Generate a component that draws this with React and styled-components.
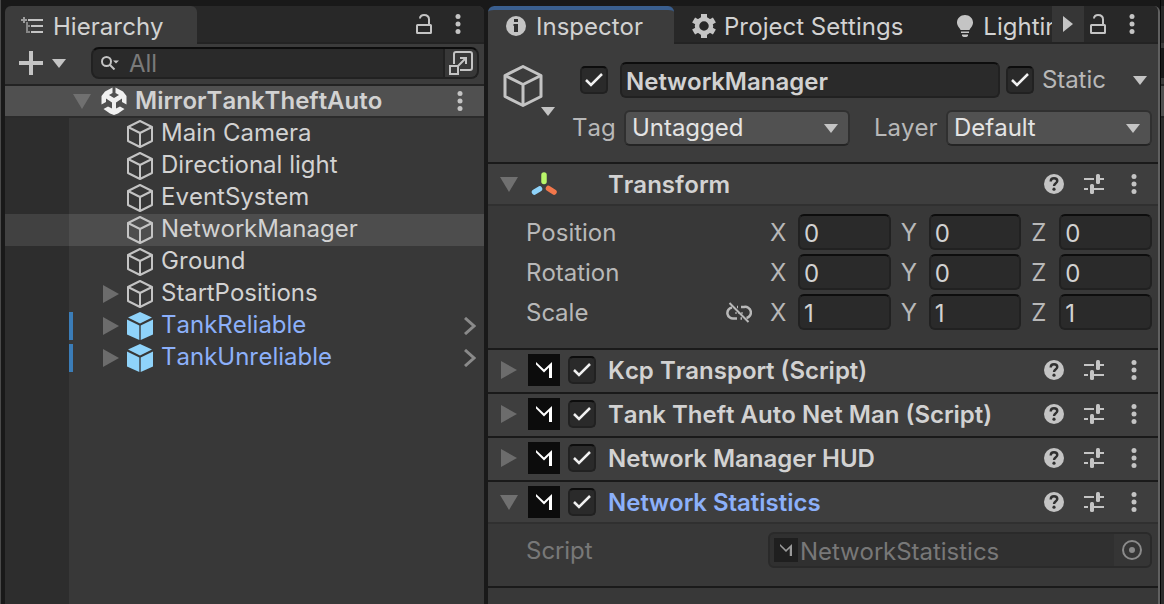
import React from 'react';
import styled, { createGlobalStyle, css } from 'styled-components';

const Global = createGlobalStyle`
  *, *::before, *::after { box-sizing: border-box; }
  body { margin: 0; background: #191919; }
  button, input, select { font: inherit; font-kerning: inherit; color: inherit; margin: 0; }
`;

const Editor = styled.div`
  display: flex;
  min-height: 100vh;
  color: #d2d2d2;
  background: #191919;
  font: 400 24px/32px Inter, "Noto Sans", sans-serif;
  font-kerning: none;
  overflow: hidden;
`;

const LeftEdge = styled.div`
  flex: 0 0 5px;
  border-left: 1px solid #4a4a4a;
`;

const RightEdge = styled.div`
  flex: 0 0 4px;
  border-left: 1px solid #050505;
  background: linear-gradient(#191919 6px, #282828 6px 43px, #3c3c3c 43px 48px, #191919 48px 78px, #3c3c3c 78px 84px, #232323 84px 86px, #505050 86px 116px, #232323 116px 118px, #2d2d2d 118px);
`;

const Panel = styled.section`
  display: flex;
  flex-direction: column;
  flex: ${p => p.$grow} 1 0;
  min-width: 0;
  margin-top: 6px;
  background: #383838;
  border-radius: 6px 6px 0 0;
  overflow: hidden;
`;

const InspectorPanel = styled(Panel)`
  margin-left: 4px;
  border-right: 2px solid #606060;
`;

const TabStrip = styled.header`
  display: flex;
  height: 38px;
  background: #282828;
  box-shadow: inset 0 -2px #232323;
`;

const Tabs = styled.div`
  display: flex;
  flex: 1 1 0;
  min-width: 0;
  overflow: hidden;
`;

const Tab = styled.button`
  display: flex;
  flex: none;
  align-items: center;
  gap: ${p => p.$gap || 10}px;
  height: 38px;
  padding: 0 ${p => p.$end || 0}px 0 ${p => p.$start || 18}px;
  border: 0;
  border-radius: 6px 6px 0 0;
  background: none;
  white-space: nowrap;
  & > span { padding-top: 3px; }
  & > svg { margin-top: 2px; }
  ${p => p.$active && css`
    background: #3c3c3c;
    min-width: ${p.$min}px;
  `}
  ${p => p.$focused && css`border-top: 4px solid #3a5f8f; & > span { padding: 0; } & > svg { margin-top: -2px; }`}
`;

const IconButton = styled.button`
  display: grid;
  place-items: center;
  flex: none;
  width: ${p => p.$w || 24}px;
  height: ${p => p.$h || 36}px;
  padding: 0;
  border: 0;
  background: ${p => p.$bg || 'none'};
  color: #c4c4c4;
`;

const TabActions = styled.div`
  display: flex;
  gap: ${p => p.$gap || 10}px;
  padding-right: 14px;
`;

const Toolbar = styled.div`
  display: flex;
  align-items: center;
  height: 42px;
  padding: 0 5px 2px 14px;
  background: #3c3c3c;
  border-bottom: 2px solid #232323;
`;

const AddButton = styled(IconButton)`
  display: flex;
  justify-content: flex-start;
  align-items: center;
  gap: 9px;
`;

const SearchBox = styled.label`
  display: flex;
  align-items: center;
  flex: 1;
  min-width: 0;
  height: 32px;
  padding-left: 8px;
  border: 2px solid #212121;
  border-top-color: #0d0d0d;
  border-radius: 8px;
  background: #2a2a2a;
  overflow: hidden;
`;

const SearchInput = styled.input`
  flex: 1;
  min-width: 0;
  padding: 2px 0 0 10px;
  border: 0;
  background: none;
  &::placeholder { color: #7a7a7a; opacity: 1; }
`;

const SearchPopout = styled(IconButton)`
  border-left: 2px solid #212121;
  background: #383838;
`;

const SceneRow = styled.div`
  display: flex;
  align-items: center;
  height: 32px;
  padding: 0 12px 0 63px;
  background: #505050;
  border-bottom: 2px solid #2b2b2b;
  font-weight: 600;
`;

const SceneFold = styled(IconButton)`
  width: 28px;
  height: 30px;
  margin-right: 5px;
`;

const SceneName = styled.span`
  flex: 1;
  padding-left: 8px;
`;

const Tree = styled.ul`
  flex: 1;
  margin: 0;
  padding: 0;
  list-style: none;
  background: linear-gradient(90deg, #2d2d2d 64px, #383838 64px);
`;

const TreeRow = styled.li`
  display: flex;
  align-items: center;
  height: 32px;
  padding: 0 8px 0 64px;
  color: ${p => (p.$prefab ? '#8cb0fa' : 'inherit')};
  background: ${p => (p.$selected ? 'linear-gradient(90deg, #414141 64px, #4d4d4d 64px)' : 'none')};
`;

const OverrideBar = styled.i`
  width: 4px;
  height: 28px;
  background: ${p => (p.$on ? '#3b7db8' : 'transparent')};
`;

const Expander = styled.span`
  display: flex;
  justify-content: flex-end;
  width: 46px;
  margin-right: 7px;
`;

const TreeName = styled.span`
  flex: 1;
  padding: 0 0 2px 7px;
`;

const ObjectHeader = styled.div`
  display: flex;
  gap: 10px;
  padding: 18px 6px 16px 14px;
  background: #3c3c3c;
`;

const ObjectIcon = styled(IconButton)`
  display: flex;
  align-items: flex-start;
  width: 56px;
  height: 54px;
  padding-top: 3px;
  & > svg:last-child { align-self: flex-end; margin-left: -3px; }
`;

const ObjectFields = styled.div`
  display: flex;
  flex: 1;
  flex-direction: column;
  gap: 12px;
  min-width: 0;
`;

const FieldLine = styled.div`
  display: flex;
  align-items: center;
  height: 36px;
`;

const NameLine = styled(FieldLine)`
  padding-left: 12px;
  gap: 6px;
  & > input { margin-left: 6px; flex: 1; font-weight: 600; }
`;

const StaticLabel = styled.label`
  display: flex;
  align-items: center;
  gap: 8px;
  padding-right: 16px;
  color: #b8b8b8;
`;

const PickerLine = styled(FieldLine)`
  padding-left: 4px;
  color: #b8b8b8;
`;

const FieldLabel = styled.label`
  width: ${p => p.$w}px;
  flex: none;
`;

const TextField = styled.input`
  min-width: 0;
  width: 100%;
  height: 36px;
  padding: 2px 0 0 4px;
  border: 2px solid #212121;
  border-top-color: #0d0d0d;
  border-radius: 6px;
  background: #2a2a2a;
  color: #d2d2d2;
`;

const SelectWrap = styled.span`
  display: grid;
  align-items: center;
  flex: ${p => p.$grow} 1 0;
  min-width: 0;
  margin-right: ${p => p.$end || 0}px;
  & > * { grid-area: 1 / 1; }
  & > svg { justify-self: end; margin-right: 12px; pointer-events: none; }
`;

const Select = styled.select`
  appearance: none;
  width: 100%;
  height: 36px;
  padding: 0 32px 2px 6px;
  border: 2px solid #303030;
  border-bottom-color: #242424;
  border-radius: 6px;
  background: #515151;
  color: #e4e4e4;
`;

const CheckWrap = styled.span`
  display: grid;
  place-items: center;
  flex: none;
  & > * { grid-area: 1 / 1; }
  & > svg { pointer-events: none; }
`;

const CheckInput = styled.input`
  appearance: none;
  width: 28px;
  height: 28px;
  border: 2px solid #212121;
  border-top-color: #0d0d0d;
  border-radius: 5px;
  background: #2a2a2a;
`;

const Component = styled.section`
  border-top: 2px solid #1a1a1a;
`;

const ComponentHeader = styled.header`
  display: flex;
  align-items: center;
  height: 42px;
  padding: 0 12px 2px 10px;
  background: #3e3e3e;
  ${p => p.$open && css`box-shadow: inset 0 -2px #303030;`}
`;

const FoldButton = styled(IconButton)`
  width: 22px;
  height: 32px;
  margin-right: 8px;
`;

const ComponentTitle = styled.h2`
  flex: 1;
  margin: 0;
  padding: 2px 0 0 12px;
  font-size: 24px;
  line-height: 32px;
  font-weight: 600;
  white-space: nowrap;
  color: ${p => (p.$accent ? '#8cb0fa' : 'inherit')};
`;

const IconSlot = styled.span`
  display: grid;
  place-items: center;
  width: 32px;
  height: 32px;
  margin-right: ${p => p.$end}px;
`;

const HeaderTools = styled.div`
  display: flex;
  gap: 16px;
`;

const Fields = styled.div`
  display: flex;
  flex-direction: column;
  gap: 4px;
  padding: 8px 6px 18px 38px;
`;

const Property = styled.div`
  display: grid;
  grid-template-columns: minmax(0, 242fr) minmax(0, 384fr);
  align-items: center;
  color: ${p => (p.$disabled ? '#787878' : '#b8b8b8')};
`;

const PropertyName = styled.span`
  display: flex;
  align-items: center;
  justify-content: space-between;
  padding: 2px 16px 0 0;
`;

const Axes = styled.div`
  display: flex;
  gap: 10px;
  padding-left: 2px;
`;

const Axis = styled.label`
  display: flex;
  align-items: center;
  flex: 1 1 0;
  min-width: 0;
  & > span { flex: 0 0 28px; padding-top: 2px; }
`;

const ObjectField = styled.div`
  display: flex;
  align-items: center;
  gap: 2px;
  height: 36px;
  padding-left: 4px;
  border: 2px solid #2a2a2a;
  border-radius: 6px;
  background: #303030;
  overflow: hidden;
  & > span { flex: 1; padding-top: 3px; }
`;

const Remainder = styled.div`
  flex: 1;
  border-top: 2px solid #1a1a1a;
`;

const Kebab = () => (
  <svg width="6" height="20" viewBox="0 0 6 20" fill="#c4c4c4">
    <circle cx="3" cy="2.5" r="2.5" /><circle cx="3" cy="10" r="2.5" /><circle cx="3" cy="17.5" r="2.5" />
  </svg>
);

const Lock = () => (
  <svg width="16" height="20" viewBox="0 0 16 20" fill="none" stroke="#c4c4c4" strokeWidth="2">
    <rect x="1" y="11" width="14" height="8" rx=".5" />
    <path d="M4 4.500C4 2.200 5.800 1 8 1C11 1 13 2.500 13 5.500V10.500" />
  </svg>
);

const Caret = () => (
  <svg width="14" height="9" viewBox="0 0 14 9" fill="#c4c4c4"><path d="M0 0H14L7 9Z" /></svg>
);

const Fold = ({ open }) => open
  ? <svg width="18" height="15" viewBox="0 0 18 15" fill="#707070"><path d="M0 0H18L9 15Z" /></svg>
  : <svg width="16" height="18" viewBox="0 0 16 18" fill="#6c6c6c"><path d="M0 0L16 9L0 18Z" /></svg>;

const Cube = ({ size = 28, weight = 2 }) => (
  <svg width={size} height={size} viewBox="0 0 28 28" fill="none" stroke="#c4c4c4" strokeWidth={weight} strokeLinejoin="round">
    <path d="M14 1L26 7V21L14 27L2 21V7Z" /><path d="M2 7L14 13L26 7M14 13V27" />
  </svg>
);

const PrefabCube = () => (
  <svg width="28" height="28" viewBox="0 0 28 28" fill="#8fd3fa">
    <path d="M14 0L26 5.500L14 11.500L2 5.500Z" />
    <path d="M1 7.500L13.300 13.500V28L1 22.500Z" /><path d="M27 7.500L14.700 13.500V28L27 22.500Z" />
  </svg>
);

const UnityIcon = () => (
  <svg width="26" height="28" viewBox="0 0 26 28" fill="#f0f0f0">
    <path d="M11.500 .5V6L8 8L13 11L18 8L14.500 6V.5L22 4.500L25.500 9V17.500L21 15V11.500L15 15.500V21.500L19 19.500L23.500 22L17 26.500L13 28L9 26.500L2.500 22L7 19.500L11 21.500V15.500L5 11.500V15L.5 17.500V9L4 4.500Z" />
  </svg>
);

const Chevron = () => (
  <svg width="12" height="18" viewBox="0 0 12 18" fill="none" stroke="#8a8a8a" strokeWidth="3"><path d="M1 1L10 9L1 17" /></svg>
);

const HierarchyIcon = () => (
  <svg width="22" height="18" viewBox="0 0 22 18" fill="#c4c4c4">
    <path d="M7 2H22V4H7ZM10 8H22V10H10ZM10 14H22V16H10Z" />
    <path d="M2 0H4V2H6V4H4V6H2V4H0V2H2Z" opacity=".7" />
    <path d="M5 5H7V8H9V10H7V14H9V16H5Z" opacity=".55" />
  </svg>
);

const PlusIcon = () => (
  <svg width="24" height="24" viewBox="0 0 24 24" fill="#c4c4c4"><path d="M10 0H14V10H24V14H14V24H10V14H0V10H10Z" /></svg>
);

const SearchIcon = () => (
  <svg width="18" height="14" viewBox="0 0 18 14" fill="none" stroke="#c4c4c4" strokeWidth="2">
    <circle cx="5.500" cy="5.500" r="4.500" /><path d="M8.500 8.500L13.500 13.500" /><path d="M12 4.500H18L15 7.500Z" fill="#c4c4c4" stroke="none" />
  </svg>
);

const PopoutIcon = () => (
  <svg width="24" height="24" viewBox="0 0 24 24" fill="none" stroke="#c4c4c4" strokeWidth="2">
    <path d="M5 13V3Q5 1 7 1H21Q23 1 23 3V17Q23 19 21 19H11" /><path d="M1 15H9V23H1Z" /><path d="M9 15L17 7M11 7H17V13" />
  </svg>
);

const InfoIcon = () => (
  <svg width="20" height="20" viewBox="0 0 20 20">
    <circle cx="10" cy="10" r="10" fill="#c4c4c4" />
    <path d="M8 3H12V6H8ZM7.500 8H12V16H8V10H7.500Z" fill="#303030" />
  </svg>
);

const GearIcon = () => (
  <svg width="24" height="24" viewBox="0 0 24 24" fill="none" stroke="#c4c4c4">
    <circle cx="12" cy="12" r="7" strokeWidth="4.500" />
    <path d="M12 0V5M12 19V24M1.600 6L6 8.500M18 15.500L22.400 18M22.400 6L18 8.500M6 15.500L1.600 18" strokeWidth="6" />
  </svg>
);

const BulbIcon = () => (
  <svg width="16" height="22" viewBox="0 0 16 22" fill="#c4c4c4">
    <path d="M8 0C12.500 0 16 3.200 16 7.500C16 11 13.500 12.500 12.500 15H3.500C2.500 12.500 0 11 0 7.500C0 3.200 3.500 0 8 0Z" />
    <path d="M4 16.500H12V18H4ZM5 19.500H11V21L9.500 22H6.500L5 21Z" />
  </svg>
);

const ScrollIcon = () => (
  <svg width="10" height="16" viewBox="0 0 10 16" fill="#c4c4c4"><path d="M0 0L10 8L0 16Z" /></svg>
);

const TransformIcon = () => (
  <svg width="28" height="24" viewBox="0 0 28 24" strokeLinecap="round" strokeWidth="5.500">
    <path d="M14 3V9.500" stroke="#b9f66a" /><path d="M9.500 17L4.500 20" stroke="#8fd3fa" /><path d="M18.500 16.500L24 20" stroke="#f2774b" />
  </svg>
);

const ScriptIcon = ({ size = 32, dim }) => (
  <svg width={size} height={size} viewBox="0 0 32 32">
    <path d="M0 0H32V32H0Z" fill={dim ? '#1f1f1f' : '#0c0c0c'} />
    <path d="M8 8L16 15.500L24 8V24H21V13.500L16 18.500L8 10.500Z" fill={dim ? '#9a9a9a' : '#fff'} />
  </svg>
);

const HelpIcon = () => (
  <svg width="20" height="20" viewBox="0 0 20 20" fill="none">
    <circle cx="10" cy="10" r="10" fill="#c4c4c4" />
    <path d="M6.700 7.500C6.700 5.500 8 4.300 10 4.300C12 4.300 13.300 5.400 13.300 7.100C13.300 9.300 10 9.300 10 12" stroke="#303030" strokeWidth="2.400" />
    <circle cx="10" cy="15.200" r="1.600" fill="#303030" />
  </svg>
);

const PresetIcon = () => (
  <svg width="20" height="20" viewBox="0 0 20 20" fill="#c4c4c4">
    <path d="M0 4H10V6H0ZM16 4H20V6H16ZM0 14H4V16H0ZM10 14H20V16H10Z" />
    <rect x="12" y="0" width="4" height="10" rx="1.500" /><rect x="6" y="10" width="4" height="10" rx="1.500" />
  </svg>
);

const UnlinkIcon = () => (
  <svg width="26" height="22" viewBox="0 0 26 22" fill="none" stroke="#b8b8b8" strokeWidth="2.500">
    <path d="M11 16.500H8A5.500 5.500 0 0 1 6 5.500M11 5H12M15 5H18A5.500 5.500 0 0 1 20.500 16M14.500 16.500H16" />
    <path d="M9 11H18" strokeWidth="2" strokeDasharray="2 1" opacity=".6" />
    <path d="M3.500 1L22.500 20" strokeWidth="2" />
  </svg>
);

const PickIcon = () => (
  <svg width="20" height="20" viewBox="0 0 20 20" fill="none" stroke="#8a8a8a" strokeWidth="2">
    <circle cx="10" cy="10" r="9" /><circle cx="10" cy="10" r="3" fill="#8a8a8a" stroke="none" />
  </svg>
);

const Check = props => (
  <CheckWrap>
    <CheckInput type="checkbox" defaultChecked {...props} />
    <svg width="18" height="14" viewBox="0 0 18 14" fill="none" stroke="#f0f0f0" strokeWidth="2.500"><path d="M1 7L6 12L17 1" /></svg>
  </CheckWrap>
);

const objects = [
  { name: 'Main Camera' },
  { name: 'Directional light' },
  { name: 'EventSystem' },
  { name: 'NetworkManager', selected: true },
  { name: 'Ground' },
  { name: 'StartPositions', children: true },
  { name: 'TankReliable', children: true, prefab: true },
  { name: 'TankUnreliable', children: true, prefab: true },
];

const transform = [
  { name: 'Position', value: '0' },
  { name: 'Rotation', value: '0' },
  { name: 'Scale', value: '1', unlinked: true },
];

function ComponentBlock({ title, open, accent, builtIn, children }) {
  return (
    <Component>
      <ComponentHeader $open={open}>
        <FoldButton aria-label={`Fold ${title}`}><Fold open={open} /></FoldButton>
        {builtIn
          ? <IconSlot $end={36}><TransformIcon /></IconSlot>
          : <><IconSlot $end={8}><ScriptIcon /></IconSlot><Check aria-label={`Enable ${title}`} /></>}
        <ComponentTitle $accent={accent}>{title}</ComponentTitle>
        <HeaderTools>
          <IconButton aria-label="Help"><HelpIcon /></IconButton>
          <IconButton aria-label="Presets"><PresetIcon /></IconButton>
          <IconButton aria-label="More"><Kebab /></IconButton>
        </HeaderTools>
      </ComponentHeader>
      {children && <Fields>{children}</Fields>}
    </Component>
  );
}

function Hierarchy() {
  return (
    <Panel $grow={479}>
      <TabStrip>
        <Tabs><Tab $active $min={192} $start={16}><HierarchyIcon /><span>Hierarchy</span></Tab></Tabs>
        <TabActions>
          <IconButton aria-label="Lock"><Lock /></IconButton>
          <IconButton aria-label="More"><Kebab /></IconButton>
        </TabActions>
      </TabStrip>
      <Toolbar>
        <AddButton $w={72} aria-label="Create"><PlusIcon /><Caret /></AddButton>
        <SearchBox>
          <SearchIcon />
          <SearchInput type="text" placeholder="All" aria-label="Search" />
          <SearchPopout $w={34} $h={28} aria-label="Open search"><PopoutIcon /></SearchPopout>
        </SearchBox>
      </Toolbar>
      <SceneRow>
        <SceneFold aria-label="Fold scene"><Fold open /></SceneFold>
        <UnityIcon />
        <SceneName>MirrorTankTheftAuto</SceneName>
        <IconButton $h={30} aria-label="Scene menu"><Kebab /></IconButton>
      </SceneRow>
      <Tree>
        {objects.map(o => (
          <TreeRow key={o.name} $prefab={o.prefab} $selected={o.selected}>
            <OverrideBar $on={o.prefab} />
            <Expander>{o.children && <Fold />}</Expander>
            {o.prefab ? <PrefabCube /> : <Cube />}
            <TreeName>{o.name}</TreeName>
            {o.prefab && <Chevron />}
          </TreeRow>
        ))}
      </Tree>
    </Panel>
  );
}

function Inspector() {
  return (
    <InspectorPanel $grow={670}>
      <TabStrip>
        <Tabs>
          <Tab $active $focused $min={186}><InfoIcon /><span>Inspector</span></Tab>
          <Tab $gap={8} $end={36}><GearIcon /><span>Project Settings</span></Tab>
          <Tab $end={16}><BulbIcon /><span>Lighting</span></Tab>
        </Tabs>
        <IconButton $w={32} $bg="#363636" aria-label="Scroll tabs"><ScrollIcon /></IconButton>
        <TabActions $gap={8}>
          <IconButton $w={28} aria-label="Lock"><Lock /></IconButton>
          <IconButton aria-label="More"><Kebab /></IconButton>
        </TabActions>
      </TabStrip>
      <ObjectHeader>
        <ObjectIcon aria-label="Object icon"><Cube size={42} /><Caret /></ObjectIcon>
        <ObjectFields>
          <NameLine>
            <Check aria-label="Active" />
            <TextField defaultValue="NetworkManager" aria-label="Name" />
            <StaticLabel><Check />Static</StaticLabel>
            <IconButton aria-label="Static options"><Caret /></IconButton>
          </NameLine>
          <PickerLine>
            <FieldLabel $w={52} htmlFor="tag">Tag</FieldLabel>
            <SelectWrap $grow={226} $end={24}>
              <Select id="tag"><option>Untagged</option></Select><Caret />
            </SelectWrap>
            <FieldLabel $w={72} htmlFor="layer">Layer</FieldLabel>
            <SelectWrap $grow={206}>
              <Select id="layer"><option>Default</option></Select><Caret />
            </SelectWrap>
          </PickerLine>
        </ObjectFields>
      </ObjectHeader>
      <ComponentBlock title="Transform" open builtIn>
        {transform.map(row => (
          <Property key={row.name}>
            <PropertyName>{row.name}{row.unlinked && <UnlinkIcon />}</PropertyName>
            <Axes>
              {['X', 'Y', 'Z'].map(a => (
                <Axis key={a}><span>{a}</span><TextField defaultValue={row.value} /></Axis>
              ))}
            </Axes>
          </Property>
        ))}
      </ComponentBlock>
      <ComponentBlock title="Kcp Transport (Script)" />
      <ComponentBlock title="Tank Theft Auto Net Man (Script)" />
      <ComponentBlock title="Network Manager HUD" />
      <ComponentBlock title="Network Statistics" open accent>
        <Property $disabled>
          <PropertyName>Script</PropertyName>
          <ObjectField>
            <ScriptIcon size={24} dim />
            <span>NetworkStatistics</span>
            <IconButton $w={36} $h={32} $bg="#353535" aria-label="Pick script"><PickIcon /></IconButton>
          </ObjectField>
        </Property>
      </ComponentBlock>
      <Remainder />
    </InspectorPanel>
  );
}

export default function App() {
  return (
    <>
      <Global />
      <Editor>
        <LeftEdge />
        <Hierarchy />
        <Inspector />
        <RightEdge />
      </Editor>
    </>
  );
}
